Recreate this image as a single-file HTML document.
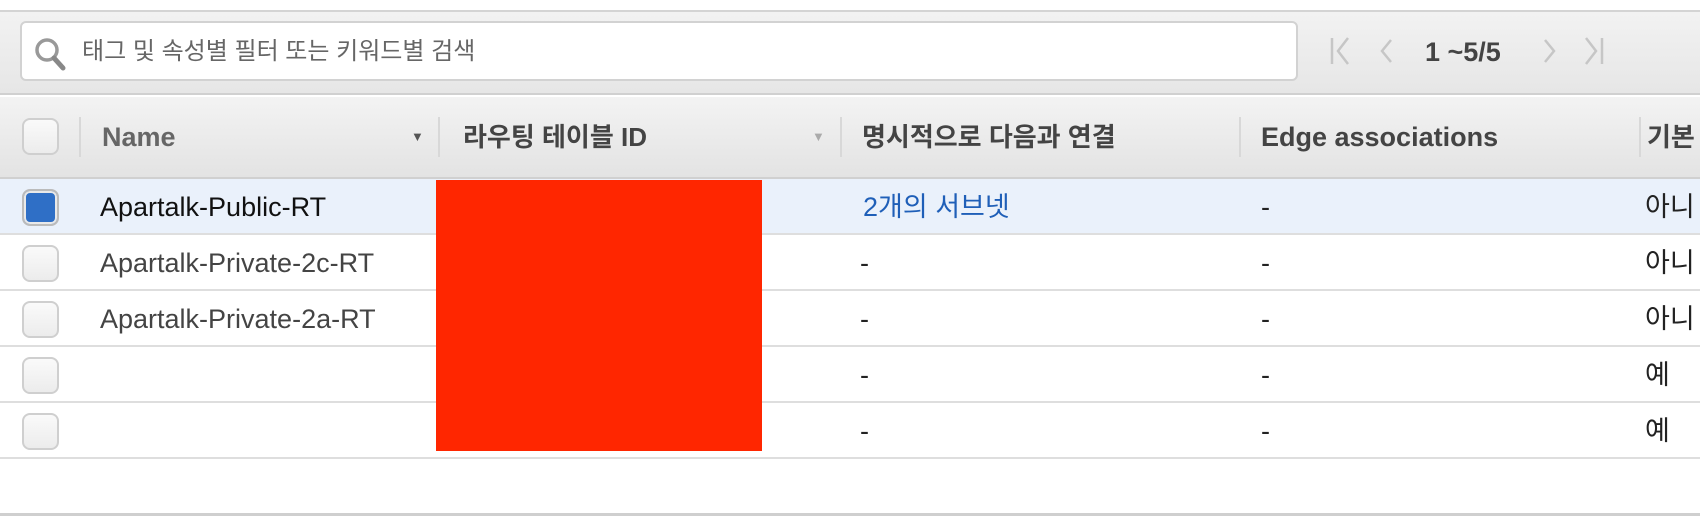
<!DOCTYPE html>
<html><head><meta charset="utf-8"><style>
*{margin:0;padding:0;box-sizing:border-box}
body{width:1700px;height:516px;background:#fff;position:relative;overflow:hidden;font-family:"Liberation Sans","Noto Sans CJK KR",sans-serif;color:#222;line-height:30px}
.abs{position:absolute;white-space:nowrap}
.tool{left:0;top:10px;width:1700px;height:85px;background:linear-gradient(#f2f2f2,#e6e6e6);border-top:2px solid #d4d4d4;border-bottom:2px solid #d0d0d0}
.search{left:20px;top:21px;width:1278px;height:60px;background:#fff;border:2px solid #d2d2d2;border-radius:6px}
.ph{left:82px;top:37px;font-size:24px;color:#666}
.head{left:0;top:97px;width:1700px;height:82px;background:linear-gradient(#f3f3f3,#e3e3e3);border-bottom:2px solid #d0d0d0}
.ht{font-size:27px;font-weight:bold;color:#444;top:122px}
.sep{width:2px;height:40px;top:117px;background:#d8d8d8}
.cb{width:37px;height:37px;border:2px solid #cfcfcf;border-radius:8px;background:linear-gradient(#fafafa,#ececec);left:22px}
.row{left:0;width:1700px;height:56px;border-bottom:2px solid #dedede}
.td{font-size:27px;color:#222}
.arrow{font-size:13px;color:#555}
</style></head><body>
<div class="abs tool"></div>
<div class="abs search"></div>
<svg class="abs" style="left:33px;top:36px" width="36" height="36" viewBox="0 0 36 36"><circle cx="14" cy="14" r="10" fill="none" stroke="#999" stroke-width="3.5"/><line x1="21" y1="22" x2="30" y2="32" stroke="#888" stroke-width="5" stroke-linecap="round"/></svg>
<div class="abs ph">태그 및 속성별 필터 또는 키워드별 검색</div>
<svg class="abs" style="left:1320px;top:34px" width="300" height="34" viewBox="0 0 300 34" fill="none" stroke="#c6c6c6" stroke-width="2.5">
<line x1="12" y1="4" x2="12" y2="30"/><polyline points="28,4 18,17 28,30"/>
<polyline points="71,6 62,17 71,28"/>
<polyline points="225,6 234,17 225,28"/>
<polyline points="266,4 276,17 266,30"/><line x1="282" y1="4" x2="282" y2="30"/>
</svg>
<div class="abs" style="left:1425px;top:37px;font-size:27px;font-weight:bold;color:#444">1 ~5/5</div>

<div class="abs head"></div>
<div class="abs cb" style="top:118px"></div>
<div class="abs sep" style="left:79px"></div>
<div class="abs ht" style="left:102px;color:#666">Name</div>
<div class="abs arrow" style="left:411px;top:122px">▼</div>
<div class="abs sep" style="left:438px"></div>
<div class="abs ht" style="left:463px;font-size:26px">라우팅 테이블 ID</div>
<div class="abs arrow" style="left:812px;top:122px;color:#aaa">▼</div>
<div class="abs sep" style="left:840px"></div>
<div class="abs ht" style="left:862px;font-size:26px">명시적으로 다음과 연결</div>
<div class="abs sep" style="left:1239px"></div>
<div class="abs ht" style="left:1261px">Edge associations</div>
<div class="abs sep" style="left:1639px"></div>
<div class="abs ht" style="left:1647px;font-size:26px">기본</div>

<div class="abs row" style="top:179px;background:#eaf1fb"></div>
<div class="abs row" style="top:235px"></div>
<div class="abs row" style="top:291px"></div>
<div class="abs row" style="top:347px"></div>
<div class="abs row" style="top:403px"></div>

<div class="abs cb" style="top:189px;background:#2f6fc6;border-color:#bbb;box-shadow:inset 0 0 0 2px #e9e9e9"></div>
<div class="abs cb" style="top:245px"></div>
<div class="abs cb" style="top:301px"></div>
<div class="abs cb" style="top:357px"></div>
<div class="abs cb" style="top:413px"></div>

<div class="abs td" style="left:100px;top:192px;color:#111">Apartalk-Public-RT</div>
<div class="abs td" style="left:100px;top:248px;color:#444">Apartalk-Private-2c-RT</div>
<div class="abs td" style="left:100px;top:304px;color:#444">Apartalk-Private-2a-RT</div>

<div class="abs" style="left:436px;top:180px;width:326px;height:271px;background:#ff2600"></div>

<div class="abs td" style="left:863px;top:192px;color:#1f5fb8">2개의 서브넷</div>
<div class="abs td" style="left:860px;top:248px">-</div>
<div class="abs td" style="left:860px;top:304px">-</div>
<div class="abs td" style="left:860px;top:360px">-</div>
<div class="abs td" style="left:860px;top:416px">-</div>
<div class="abs td" style="left:1261px;top:192px">-</div>
<div class="abs td" style="left:1261px;top:248px">-</div>
<div class="abs td" style="left:1261px;top:304px">-</div>
<div class="abs td" style="left:1261px;top:360px">-</div>
<div class="abs td" style="left:1261px;top:416px">-</div>
<div class="abs td" style="left:1645px;top:192px">아니</div>
<div class="abs td" style="left:1645px;top:248px">아니</div>
<div class="abs td" style="left:1645px;top:304px">아니</div>
<div class="abs td" style="left:1645px;top:360px">예</div>
<div class="abs td" style="left:1645px;top:416px">예</div>

<div class="abs" style="left:0;top:513px;width:1700px;height:3px;background:#cfcfcf"></div>
</body></html>
